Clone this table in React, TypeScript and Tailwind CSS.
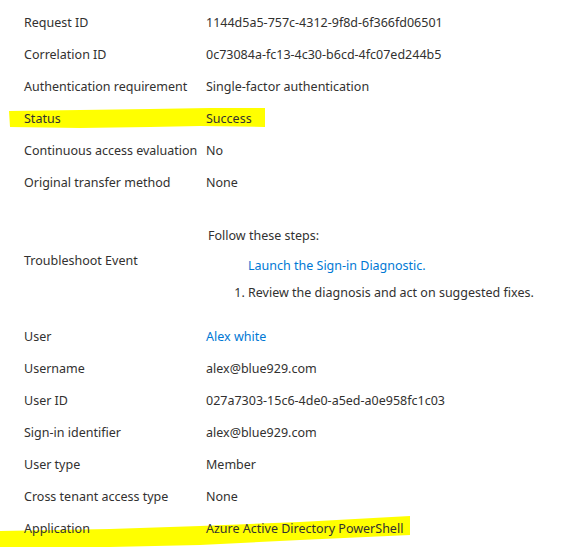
const rowsTop = [
  { label: "Request ID", value: "1144d5a5-757c-4312-9f8d-6f366fd06501" },
  { label: "Correlation ID", value: "0c73084a-fc13-4c30-b6cd-4fc07ed244b5" },
  { label: "Authentication requirement", value: "Single-factor authentication" },
  { label: "Status", value: "Success" },
  { label: "Continuous access evaluation", value: "No" },
  { label: "Original transfer method", value: "None" },
];

const rowsBottom = [
  { label: "User", value: "Alex white", link: true },
  { label: "Username", value: "alex@blue929.com" },
  { label: "User ID", value: "027a7303-15c6-4de0-a5ed-a0e958fc1c03" },
  { label: "Sign-in identifier", value: "alex@blue929.com" },
  { label: "User type", value: "Member" },
  { label: "Cross tenant access type", value: "None" },
  { label: "Application", value: "Azure Active Directory PowerShell" },
];

function Row({ label, value, link }: { label: string; value: string; link?: boolean }) {
  return (
    <div className="flex h-8 items-center">
      <div className="w-[206px] shrink-0 pl-6 whitespace-nowrap">{label}</div>
      <div className={link ? "text-[#0078d4]" : ""}>{value}</div>
    </div>
  );
}

export default function App() {
  return (
    <div className="relative h-[547px] w-[561px] overflow-hidden bg-white pt-[7px] text-[12.5px] leading-[18px] text-[#323130] font-['Noto_Sans','Open_Sans',sans-serif]">
      {/* marker highlights */}
      <svg className="pointer-events-none absolute left-0 top-0" width="561" height="547">
        <polygon
          fill="#ffff00"
          points="9,111 80,110 150,109 210,108 265,108 265,127 200,126 150,127 80,128 10,127"
        />
        <polygon
          fill="#ffff00"
          points="0,531 110,529 200,526 300,522 410,516 410,535 300,540 200,545 110,547 0,547"
        />
      </svg>
      <div className="relative">
        {rowsTop.map((r) => (
          <Row key={r.label} {...r} />
        ))}
        <div className="flex h-[122px]">
          <div className="w-[206px] shrink-0 pl-6 pt-[53px]">Troubleshoot Event</div>
          <div className="pt-[28px] pl-[2px]">
            <div>Follow these steps:</div>
            <div className="mt-3 pl-[40px] text-[#0078d4]">Launch the Sign-in Diagnostic.</div>
            <ol className="mt-[9px] list-decimal pl-[40px]">
              <li>Review the diagnosis and act on suggested fixes.</li>
            </ol>
          </div>
        </div>
        {rowsBottom.map((r) => (
          <Row key={r.label} {...r} />
        ))}
      </div>
    </div>
  );
}
